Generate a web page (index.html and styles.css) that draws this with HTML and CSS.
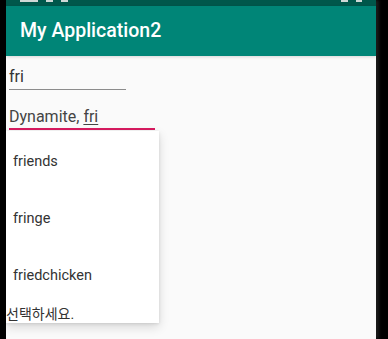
FILE: index.html
```html
<!DOCTYPE html>
<html lang="ko">
<head>
    <meta charset="UTF-8">
    <meta name="viewport" content="width=device-width, initial-scale=1.0">
    <title>My Application2</title>
    <link rel="stylesheet" href="styles.css">
</head>
<body>
    <div class="screen">
        <div class="status-bar">
            <span class="sb-mark sb-time"></span>
            <span class="sb-mark sb-icon"></span>
            <span class="sb-mark sb-icon"></span>
            <span class="sb-spacer"></span>
            <span class="sb-mark sb-icon"></span>
            <span class="sb-mark sb-battery"></span>
        </div>
        <div class="app-bar">
            <h1>My Application2</h1>
        </div>
        <div class="content">
            <div class="field field-short">fri</div>
            <div class="field field-focused">Dynamite, <span class="composing">fri</span></div>

            <ul class="suggestions">
                <li>friends</li>
                <li>fringe</li>
                <li>friedchicken</li>
            </ul>

            <p class="hint">선택하세요.</p>
        </div>
    </div>
</body>
</html>
```

FILE: styles.css
```css
* {
    margin: 0;
    padding: 0;
    box-sizing: border-box;
}

body {
    background: #000;
    font-family: Roboto, "Noto Sans CJK KR", sans-serif;
    width: 388px;
    height: 339px;
    overflow: hidden;
}

.screen {
    width: 370px;
    height: 339px;
    margin-left: 6px;
    background: #fafafa;
    box-shadow: 3px 0 3px #1c1c1c;
}

.status-bar {
    height: 6px;
    background: #00574b;
    display: flex;
    align-items: flex-start;
    gap: 8px;
    padding: 0 10px;
}

.sb-mark {
    display: block;
    height: 2px;
    background: #cfd8d6;
}

.sb-time {
    width: 18px;
    margin-left: 4px;
}

.sb-icon {
    width: 7px;
}

.sb-spacer {
    flex: 1;
}

.sb-battery {
    width: 6px;
    margin-right: 4px;
}

.app-bar {
    height: 50px;
    background: #008577;
    display: flex;
    align-items: center;
    padding: 0 14px;
    box-shadow: 0 1px 3px rgba(0, 0, 0, 0.15);
}

.app-bar h1 {
    color: #fff;
    font-size: 19.5px;
    font-weight: 500;
    margin-top: -1px;
}

.content {
    position: relative;
    padding: 11px 0 0 3px;
}

.field {
    font-size: 16px;
    line-height: 19px;
    color: #333;
}

.field-short {
    width: 117px;
    padding-bottom: 3px;
    border-bottom: 1px solid #8c8c8c;
}

.field-focused {
    width: 146px;
    margin-top: 17px;
    padding-bottom: 2px;
    border-bottom: 2px solid #d81b60;
    color: #444;
}

.composing {
    text-decoration: underline;
    text-underline-offset: 2px;
}

.suggestions {
    list-style: none;
    position: absolute;
    left: 0;
    top: 75px;
    z-index: 1;
    width: 153px;
    height: 192px;
    padding-top: 2px;
    background: #fff;
    box-shadow: 0 4px 10px rgba(0, 0, 0, 0.14), 0 1px 3px rgba(0, 0, 0, 0.1);
}

.suggestions li {
    height: 57px;
    line-height: 57px;
    padding-left: 7px;
    font-size: 14.5px;
    color: #333;
}

.hint {
    position: relative;
    z-index: 2;
    margin: 174px 0 0 -3px;
    font-size: 14px;
    line-height: 20px;
    color: #333;
}
```
